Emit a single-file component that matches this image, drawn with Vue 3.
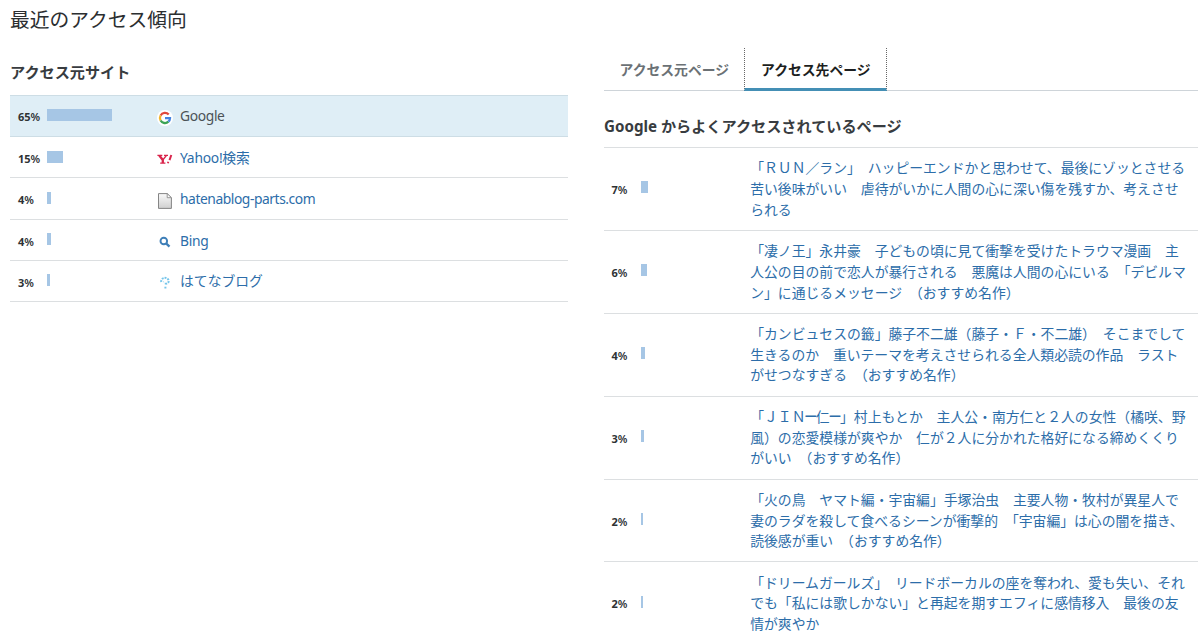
<script setup>
const sites = [
  { pct: 65, bar: 64.5, icon: 'google', name: 'Google', active: true },
  { pct: 15, bar: 15.5, icon: 'yahoo', name: 'Yahoo!検索' },
  { pct: 4, bar: 4, icon: 'file', name: 'hatenablog-parts.com', latin: true },
  { pct: 4, bar: 4, icon: 'search', name: 'Bing' },
  { pct: 3, bar: 3, icon: 'hatena', name: 'はてなブログ', kana: true },
]

const pages = [
  { pct: 7, bar: 7.5, lines: ['「ＲＵＮ／ラン」　ハッピーエンドかと思わせて、最後にゾッとさせる', '苦い後味がいい　虐待がいかに人間の心に深い傷を残すか、考えさせ', 'られる'] },
  { pct: 6, bar: 6.5, lines: ['「凄ノ王」永井豪　子どもの頃に見て衝撃を受けたトラウマ漫画　主', '人公の目の前で恋人が暴行される　悪魔は人間の心にいる　「デビルマ', 'ン」に通じるメッセージ　（おすすめ名作）'] },
  { pct: 4, bar: 4, lines: ['「カンビュセスの籤」藤子不二雄（藤子・Ｆ・不二雄）　そこまでして', '生きるのか　重いテーマを考えさせられる全人類必読の作品　ラスト', 'がせつなすぎる　（おすすめ名作）'] },
  { pct: 3, bar: 3, lines: ['「ＪＩＮ─仁─」村上もとか　主人公・南方仁と２人の女性（橘咲、野', '風）の恋愛模様が爽やか　仁が２人に分かれた格好になる締めくくり', 'がいい　（おすすめ名作）'] },
  { pct: 2, bar: 2, lines: ['「火の鳥　ヤマト編・宇宙編」手塚治虫　主要人物・牧村が異星人で', '妻のラダを殺して食べるシーンが衝撃的　「宇宙編」は心の闇を描き、', '読後感が重い　（おすすめ名作）'] },
  { pct: 2, bar: 2, lines: ['「ドリームガールズ」　リードボーカルの座を奪われ、愛も失い、それ', 'でも「私には歌しかない」と再起を期すエフィに感情移入　最後の友', '情が爽やか'] },
]

// Rules are set narrower than a full-width character, so they get their own element.
const parts = (line) => line.split(/(─)/)
</script>

<template>
  <main class="page">
    <h1>最近のアクセス傾向</h1>
    <div class="columns">
      <section class="sites">
        <h2>アクセス元サイト</h2>
        <ul class="site-list">
          <li v-for="s in sites" :key="s.name" :class="{ active: s.active }">
            <span class="pct"><b>{{ s.pct }}</b>%</span>
            <span class="track"><i class="bar" :style="{ width: s.bar + 'px' }"></i></span>
            <span class="icon">
              <svg v-if="s.icon === 'google'" width="16" height="16" viewBox="0 0 16 16" fill="none">
                <circle cx="8" cy="8" r="8" fill="#fff" />
                <g stroke-width="2.3">
                  <path d="M3.6 5.5A5 5 0 0 1 11.7 4.6" stroke="#e0483c" />
                  <path d="M3.6 10.5A5 5 0 0 1 3.6 5.5" stroke="#f2b52c" />
                  <path d="M11.4 11.7A5 5 0 0 1 3.6 10.5" stroke="#3ca457" />
                  <path d="M8 8.2H13A5 5 0 0 1 11.4 11.7" stroke="#4583e0" />
                </g>
              </svg>
              <svg v-else-if="s.icon === 'yahoo'" width="16" height="16" viewBox="0 1 16 16" fill="none" stroke="#d9254c">
                <path d="M.4 4.4H5.3M7 4.4H11M3.2 12.2H8.4" stroke-width="1.2" />
                <path d="M2.3 4.6L5.8 8.9V12" stroke-width="2.3" />
                <path d="M9.3 4.6L6 8.8" stroke-width="1.4" />
                <path d="M14.3 4L12.5 9.2" stroke-width="2" />
                <path d="M11.3 10.8L10.9 12.3" stroke-width="1.8" />
              </svg>
              <svg v-else-if="s.icon === 'file'" width="16" height="16" viewBox="0 0 16 16">
                <defs>
                  <linearGradient id="sheet" x1="0" y1="0" x2="0" y2="1">
                    <stop offset="0" stop-color="#fafafa" />
                    <stop offset="1" stop-color="#cfcfcf" />
                  </linearGradient>
                </defs>
                <path d="M1.5.6H10.2L14.4 4.7V15.4H1.5Z" fill="url(#sheet)" stroke="#858585" />
                <path d="M10.2.6V4.7H14.4Z" fill="#fff" stroke="#8b8b8b" stroke-width=".9" />
              </svg>
              <svg v-else-if="s.icon === 'search'" width="16" height="16" viewBox="0 0 16 16" fill="none" stroke="#3f7fb8">
                <circle cx="6.8" cy="7" r="3.3" stroke-width="1.9" />
                <path d="M9.1 9.4L12.5 12.7" stroke-width="2.3" />
              </svg>
              <svg v-else width="16" height="16" viewBox="0 0 16 16" fill="none" stroke="#75c5ea">
                <path d="M4.2 7A3.8 3.6 0 0 1 11.8 6Q11.8 7.8 8.8 8.8V9.9" stroke-width="2" stroke-dasharray="1.9 1" />
                <path d="M6 6.5L7.2 7.2" stroke-width="1" opacity=".6" />
                <path d="M7.4 12.6H9.4" stroke-width="1.8" />
              </svg>
            </span>
            <a class="name" :class="{ latin: s.latin, kana: s.kana }">{{ s.name }}</a>
          </li>
        </ul>
      </section>
      <section class="detail">
        <nav class="tabs">
          <a class="tab">アクセス元ページ</a>
          <a class="tab current">アクセス先ページ</a>
        </nav>
        <h2>Google からよくアクセスされているページ</h2>
        <ul class="page-list">
          <li v-for="(p, n) in pages" :key="n">
            <span class="pct"><b>{{ p.pct }}</b>%</span>
            <span class="track"><i class="bar" :style="{ width: p.bar + 'px' }"></i></span>
            <a class="title"><span v-for="line in p.lines" :key="line" class="line"><span v-for="(t, k) in parts(line)" :key="k" :class="{ rule: t === '─' }">{{ t }}</span></span></a>
          </li>
        </ul>
      </section>
    </div>
  </main>
</template>

<style>
body {
  margin: 0;
  background: #fff;
  overflow: hidden;
}
</style>

<style scoped>
.page {
  box-sizing: border-box;
  width: 1200px;
  height: 643px;
  overflow: hidden;
  padding: 6px 2px 0 10px;
  font-family: "Noto Sans", "Noto Sans CJK JP", sans-serif;
  font-size: 13.83px;
  color: #383c40;
}
h1 {
  margin: 0;
  height: 42px;
  font-size: 19.75px;
  line-height: 27px;
  font-weight: 400;
  color: #2b2e30;
}
h2 {
  margin: 0;
  font-size: 15.15px;
  font-weight: 700;
  white-space: nowrap;
}
ul {
  list-style: none;
  margin: 0;
  padding: 0;
}
.columns {
  display: flex;
  justify-content: space-between;
}
.sites {
  width: 558px;
}
.sites h2 {
  height: 47px;
  line-height: 48px;
}
.detail {
  width: 594px;
}
.site-list li {
  box-sizing: border-box;
  display: flex;
  height: 41.3px;
  padding-left: 8px;
  border-bottom: 1px solid #dcdfe1;
}
.site-list li.active {
  height: 42px;
  background: #dfeef6;
  border-top: 1px solid #cddde5;
  border-bottom-color: #cddde5;
}
.pct {
  width: 29.4px;
  font-size: 11px;
  line-height: 43px;
  color: #2e3235;
  font-weight: 600;
}
.active .pct {
  line-height: 42px;
}
.pct b {
  font-weight: 700;
}
.track {
  width: 109.6px;
  padding-top: 13.5px;
}
.active .track {
  padding-top: 13px;
}
.bar {
  display: block;
  height: 12px;
  background: #a6c6e5;
}
.icon {
  width: 23px;
  padding-top: 14.5px;
}
.active .icon {
  padding-top: 14px;
}
.icon svg {
  display: block;
}
.name {
  line-height: 42px;
  letter-spacing: -0.25px;
  color: #2c6da9;
}
.name.latin {
  letter-spacing: -0.44px;
}
.name.kana {
  line-height: 40px;
  letter-spacing: 0;
}
.active .name {
  line-height: 40px;
  letter-spacing: -0.35px;
  color: #4b5256;
}
.tabs {
  display: flex;
  box-sizing: border-box;
  height: 43px;
  border-bottom: 1px solid #ced4d9;
}
.tab {
  box-sizing: border-box;
  width: 140px;
  height: 43px;
  padding-left: 15.5px;
  font-weight: 700;
  line-height: 43px;
  color: #6b7175;
}
.tab.current {
  width: 143px;
  padding-left: 16px;
  border-left: 1px dotted #666;
  border-right: 1px dotted #666;
  border-bottom: 3px solid #448fb5;
  color: #1c1e20;
}
.detail h2 {
  height: 56px;
  line-height: 70px;
  border-bottom: 1px solid #dcdfe1;
}
.page-list li {
  box-sizing: border-box;
  display: flex;
  height: 82.9px;
  padding-left: 7.5px;
  border-bottom: 1px solid #dcdfe1;
}
.page-list .pct {
  line-height: 84.5px;
}
.page-list .track {
  width: 109.3px;
  padding-top: 33.4px;
}
.title {
  padding-top: 10.2px;
  line-height: 20.75px;
  color: #2c6da9;
}
.line {
  display: block;
  height: 20.75px;
  white-space: nowrap;
}
.rule {
  font-family: "DejaVu Sans", sans-serif;
  font-size: 17.2px;
  line-height: 0;
}
</style>
